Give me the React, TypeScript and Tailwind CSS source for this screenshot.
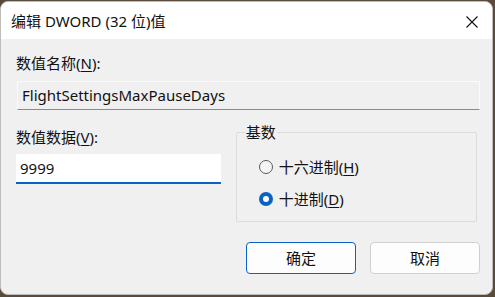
import React from "react";

const font = { fontFamily: '"Noto Sans", "Noto Sans CJK SC", sans-serif' };

export default function App() {
  return (
    <div className="w-[495px] h-[297px] bg-[#5a4a3a] overflow-hidden" style={font}>
      <div className="ml-0 mt-[1px] w-[493px] h-[294px] rounded-[8px] overflow-hidden border border-[#bdbdbd] bg-[#f0f0f0] flex flex-col">
        <div className="h-[37px] bg-white flex items-center justify-between pl-[10px] pr-[13px] shrink-0">
          <span className="text-[15px] text-[#111] leading-none pt-[2px]">编辑 DWORD (32 位)值</span>
          <svg width="14" height="14" viewBox="0 0 14 14" className="mt-[2px]">
            <path d="M1.5 1.5 L12.5 12.5 M12.5 1.5 L1.5 12.5" stroke="#111" strokeWidth="1.1" />
          </svg>
        </div>
        <div className="flex flex-col px-[15px] pt-[14px]">
          <div className="text-[15px] text-[#111] leading-[20px]">
            数值名称(<span className="underline underline-offset-2">N</span>):
          </div>
          <div className="mt-[8px] h-[29px] w-[463px] ml-[1px] bg-[#f0f0f0] border border-[#fbfbfb] border-b-[#8a8a8a] flex items-center px-[4px] text-[15px] text-[#111]">
            FlightSettingsMaxPauseDays
          </div>
          <div className="mt-[17px] flex">
            <div className="flex flex-col w-[207px]">
              <div className="text-[15px] text-[#111] leading-[20px]">
                数值数据(<span className="underline underline-offset-2">V</span>):
              </div>
              <div className="mt-[7px] h-[30px] bg-white border-b-[2px] border-[#0a63c4] flex items-center px-[4px] text-[15px] text-[#111]">
                9999
              </div>
            </div>
            <div className="ml-[15px] relative mt-[5px] w-[244px] h-[90px] border border-[#dcdcdc] rounded-[2px]">
              <span className="absolute -top-[11px] left-[8px] px-[1px] bg-[#f0f0f0] text-[15px] text-[#111] leading-[20px]">基数</span>
              <div className="flex flex-col pl-[22px] pt-[24px] gap-[12px]">
                <div className="flex items-center gap-[6px] h-[20px]">
                  <span className="w-[14px] h-[14px] rounded-full border border-[#5a5a5a] bg-[#f5f5f5]" />
                  <span className="text-[15px] text-[#111]">十六进制(<span className="underline underline-offset-2">H</span>)</span>
                </div>
                <div className="flex items-center gap-[6px] h-[20px]">
                  <span className="w-[14px] h-[14px] rounded-full bg-[#0a63c4] flex items-center justify-center">
                    <span className="w-[6px] h-[6px] rounded-full bg-white" />
                  </span>
                  <span className="text-[15px] text-[#111]">十进制(<span className="underline underline-offset-2">D</span>)</span>
                </div>
              </div>
            </div>
          </div>
          <div className="mt-[20px] flex justify-end gap-[14px] -mr-[3px]">
            <button className="w-[110px] h-[32px] rounded-[4px] bg-[#fdfdfd] border border-[#0a63c4] text-[15px] text-[#111]" style={font}>确定</button>
            <button className="w-[110px] h-[32px] rounded-[4px] bg-[#fdfdfd] border border-[#d0d0d0] text-[15px] text-[#111]" style={font}>取消</button>
          </div>
        </div>
      </div>
    </div>
  );
}
